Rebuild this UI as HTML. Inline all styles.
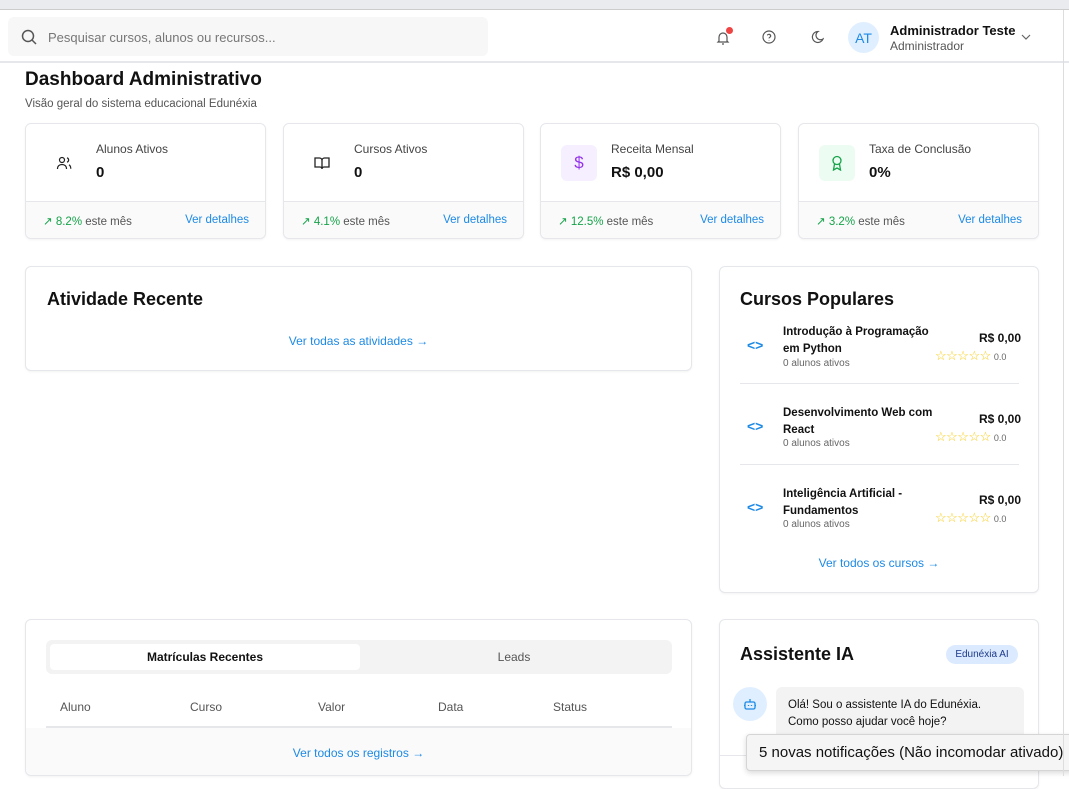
<!DOCTYPE html><html><head><meta charset="utf-8"><style>
*{box-sizing:border-box;margin:0;padding:0}
body{width:1069px;height:776px;overflow:hidden;background:#fff;font-family:"Liberation Sans",sans-serif;color:#111;position:relative}
.abs{position:absolute}
.card{position:absolute;background:#fff;border:1px solid #e5e7eb;border-radius:6px;box-shadow:0 1px 2px rgba(0,0,0,.05)}
.stat .foot{position:absolute;left:0;right:0;top:77px;bottom:0;border-top:1px solid #e5e7eb;background:#fafafa;font-size:11.5px;border-radius:0 0 6px 6px}
.g{color:#16a34a}.b{color:#1d8ae6}
.ico{position:absolute;left:20px;top:21px;width:36px;height:36px;border-radius:6px;display:flex;align-items:center;justify-content:center}
.st{font-size:13px;color:#facc15;letter-spacing:-0.5px}
</style></head><body>
<div class="abs" style="left:0;top:0;width:1069px;height:10px;background:#e9ebee;border-bottom:1px solid #ccc"></div>
<div class="abs" style="left:0;top:61px;width:1069px;height:2px;background:#e5e7eb"></div>
<div class="abs" style="left:8px;top:17px;width:480px;height:39px;background:#f7f7f7;border-radius:6px"></div>
<svg class="abs" style="left:21px;top:29px" width="16" height="16" viewBox="0 0 16 16" fill="none" stroke="#555" stroke-width="1.5"><circle cx="7" cy="7" r="5.5"/><path d="M11 11l4 4"/></svg>
<div class="abs" style="left:48px;top:30px;font-size:13px;color:#777">Pesquisar cursos, alunos ou recursos...</div>
<svg class="abs" style="left:716px;top:30px" width="14" height="16" viewBox="0 0 14 16" fill="none" stroke="#555" stroke-width="1.2"><path d="M3 11V7a4 4 0 018 0v4l1 1H2zM6 14h2"/></svg>
<div class="abs" style="left:726px;top:27px;width:7px;height:7px;border-radius:50%;background:#ef4444"></div>
<svg class="abs" style="left:762px;top:30px" width="14" height="14" viewBox="0 0 14 14" fill="none" stroke="#555" stroke-width="1.2"><circle cx="7" cy="7" r="6"/><path d="M5.3 5.3a1.8 1.8 0 013.4.7c0 1.2-1.7 1.4-1.7 2.4M7 10.3v.3"/></svg>
<svg class="abs" style="left:810px;top:30px" width="14" height="14" viewBox="0 0 14 14" fill="none" stroke="#555" stroke-width="1.2"><path d="M8 1.5a5.5 5.5 0 105 7.5A4.5 4.5 0 018 1.5z"/></svg>
<div class="abs" style="left:848px;top:22px;width:31px;height:31px;border-radius:50%;background:#e0efff;color:#1d8ae6;font-size:14px;display:flex;align-items:center;justify-content:center">AT</div>
<div class="abs" style="left:890px;top:23px;font-size:13px;font-weight:bold">Administrador Teste</div>
<div class="abs" style="left:890px;top:39px;font-size:12px;color:#555">Administrador</div>
<svg class="abs" style="left:1021px;top:34px" width="10" height="6" viewBox="0 0 10 6" fill="none" stroke="#666" stroke-width="1.2"><path d="M1 1l4 4 4-4"/></svg>
<div class="abs" style="left:25px;top:69px;font-size:19px;font-weight:bold">Dashboard Administrativo</div>
<div class="abs" style="left:25px;top:98px;font-size:11.5px;color:#555">Visão geral do sistema educacional Edunéxia</div>

<div class="card stat" style="left:25px;top:123px;width:241px;height:116px">
<div class="ico"><svg width="16" height="14" viewBox="0 0 16 14" fill="none" stroke="#222" stroke-width="1.2"><circle cx="6" cy="4" r="2.5"/><path d="M1.5 13c0-3 2-4.5 4.5-4.5s4.5 1.5 4.5 4.5M11 1.8a2.3 2.3 0 010 4.4M13 8.8c1.2.7 1.8 2 1.8 4"/></svg></div>
<div class="abs" style="left:70px;top:18px;font-size:12px;color:#444">Alunos Ativos</div>
<div class="abs" style="left:70px;top:40px;font-size:15px;font-weight:bold">0</div>
<div class="foot"><span class="abs g" style="left:17px;top:12px">↗ 8.2% <span style="color:#555">este mês</span></span><span class="abs b" style="right:16px;top:12px">Ver detalhes</span></div></div>
<div class="card stat" style="left:283px;top:123px;width:241px;height:116px">
<div class="ico"><svg width="16" height="14" viewBox="0 0 16 14" fill="none" stroke="#222" stroke-width="1.3"><path d="M1 2h4.5a2.5 2.5 0 012.5 2.5V13a2 2 0 00-2-2H1zM15 2h-4.5A2.5 2.5 0 008 4.5V13a2 2 0 012-2h5z"/></svg></div>
<div class="abs" style="left:70px;top:18px;font-size:12px;color:#444">Cursos Ativos</div>
<div class="abs" style="left:70px;top:40px;font-size:15px;font-weight:bold">0</div>
<div class="foot"><span class="abs g" style="left:17px;top:12px">↗ 4.1% <span style="color:#555">este mês</span></span><span class="abs b" style="right:16px;top:12px">Ver detalhes</span></div></div>
<div class="card stat" style="left:540px;top:123px;width:241px;height:116px">
<div class="ico" style="background:#f6efff;color:#9333ea;font-size:17px">$</div>
<div class="abs" style="left:70px;top:18px;font-size:12px;color:#444">Receita Mensal</div>
<div class="abs" style="left:70px;top:40px;font-size:15px;font-weight:bold">R$ 0,00</div>
<div class="foot"><span class="abs g" style="left:17px;top:12px">↗ 12.5% <span style="color:#555">este mês</span></span><span class="abs b" style="right:16px;top:12px">Ver detalhes</span></div></div>
<div class="card stat" style="left:798px;top:123px;width:241px;height:116px">
<div class="ico" style="background:#edfcf2"><svg width="12" height="16" viewBox="0 0 12 16" fill="none" stroke="#16a34a" stroke-width="1.3"><circle cx="6" cy="5.5" r="4"/><path d="M3.5 9l-1 6 3.5-2 3.5 2-1-6"/></svg></div>
<div class="abs" style="left:70px;top:18px;font-size:12px;color:#444">Taxa de Conclusão</div>
<div class="abs" style="left:70px;top:40px;font-size:15px;font-weight:bold">0%</div>
<div class="foot"><span class="abs g" style="left:17px;top:12px">↗ 3.2% <span style="color:#555">este mês</span></span><span class="abs b" style="right:16px;top:12px">Ver detalhes</span></div></div>

<div class="card" style="left:25px;top:266px;width:667px;height:105px">
<div class="abs" style="left:21px;top:22px;font-size:18px;font-weight:bold">Atividade Recente</div>
<div class="abs b" style="left:0;right:0;top:67px;text-align:center;font-size:12px">Ver todas as atividades →</div></div>

<div class="card" style="left:719px;top:266px;width:320px;height:327px">
<div class="abs" style="left:20px;top:22px;font-size:18px;font-weight:bold">Cursos Populares</div>
<div class="abs" style="left:20px;top:116px;width:279px;height:1px;background:#e5e7eb"></div>
<div class="abs" style="left:20px;top:197px;width:279px;height:1px;background:#e5e7eb"></div>
<div class="abs b" style="left:0;right:0;top:289px;text-align:center;font-size:12px">Ver todos os cursos →</div>
</div>

<div class="card" style="left:25px;top:619px;width:667px;height:157px">
<div class="abs" style="left:20px;top:20px;width:626px;height:34px;background:#f3f3f3;border-radius:6px"></div>
<div class="abs" style="left:24px;top:24px;width:310px;height:26px;background:#fff;border-radius:4px;font-size:12px;font-weight:bold;text-align:center;line-height:26px">Matrículas Recentes</div>
<div class="abs" style="left:334px;top:24px;width:308px;height:26px;font-size:12px;color:#555;text-align:center;line-height:26px">Leads</div>
<div class="abs" style="left:34px;top:80px;font-size:12px;color:#555">Aluno</div>
<div class="abs" style="left:164px;top:80px;font-size:12px;color:#555">Curso</div>
<div class="abs" style="left:292px;top:80px;font-size:12px;color:#555">Valor</div>
<div class="abs" style="left:412px;top:80px;font-size:12px;color:#555">Data</div>
<div class="abs" style="left:527px;top:80px;font-size:12px;color:#555">Status</div>
<div class="abs" style="left:0;right:0;top:108px;bottom:0;background:#fafafa;border-radius:0 0 6px 6px"></div>
<div class="abs" style="left:20px;top:106px;width:626px;height:2px;background:#e5e7eb"></div>
<div class="abs b" style="left:0;right:0;top:126px;text-align:center;font-size:12px">Ver todos os registros →</div>
</div>

<div class="card" style="left:719px;top:619px;width:320px;height:170px">
<div class="abs" style="left:20px;top:24px;font-size:18px;font-weight:bold">Assistente IA</div>
<div class="abs" style="left:226px;top:25px;width:72px;height:19px;border-radius:10px;background:#dbeafe;color:#1e3a8a;font-size:10px;text-align:center;line-height:19px">Edunéxia AI</div>
<div class="abs" style="left:13px;top:67px;width:34px;height:34px;border-radius:50%;background:#e0efff;display:flex;align-items:center;justify-content:center"><svg width="14" height="14" viewBox="0 0 14 14" fill="none" stroke="#1d8ae6" stroke-width="1.3"><rect x="2" y="5" width="10" height="7" rx="1.5"/><path d="M7 5V2M5.5 8v1M8.5 8v1M1 8.5h1M12 8.5h1"/></svg></div>
<div class="abs" style="left:56px;top:67px;width:248px;height:60px;background:#f3f3f3;border-radius:6px;padding:10px 12px;font-size:11.5px;line-height:17px">Olá! Sou o assistente IA do Edunéxia. Como posso ajudar você hoje?</div>
<div class="abs" style="left:0;right:0;top:135px;height:1px;background:#e5e7eb"></div>
</div>
<div class="abs" style="left:746px;top:734px;width:330px;height:37px;background:#f5f5f5;border:1px solid #d5d5d5;border-radius:4px;box-shadow:0 2px 6px rgba(0,0,0,.15);font-size:15px;padding:9px 12px;white-space:nowrap">5 novas notificações (Não incomodar ativado)</div>

<div class="abs" style="left:1063px;top:10px;width:1px;height:766px;background:#ddd"></div>

<div class="abs" style="left:747px;top:337px;color:#1d8ae6;font-size:14px;font-weight:bold">&lt;&gt;</div>
<div class="abs" style="left:783px;top:324px;font-size:11.5px;font-weight:bold;line-height:17px;width:150px">Introdução à Programação em Python</div>
<div class="abs" style="left:783px;top:358px;font-size:10px;color:#666">0 alunos ativos</div>
<div class="abs" style="left:979px;top:331px;font-size:12px;font-weight:bold">R$ 0,00</div>
<div class="abs st" style="left:935px;top:348px">☆☆☆☆☆ <span style="color:#666;font-size:9px;letter-spacing:0">0.0</span></div>

<div class="abs" style="left:747px;top:418px;color:#1d8ae6;font-size:14px;font-weight:bold">&lt;&gt;</div>
<div class="abs" style="left:783px;top:405px;font-size:11.5px;font-weight:bold;line-height:17px;width:150px">Desenvolvimento Web com React</div>
<div class="abs" style="left:783px;top:438px;font-size:10px;color:#666">0 alunos ativos</div>
<div class="abs" style="left:979px;top:412px;font-size:12px;font-weight:bold">R$ 0,00</div>
<div class="abs st" style="left:935px;top:429px">☆☆☆☆☆ <span style="color:#666;font-size:9px;letter-spacing:0">0.0</span></div>

<div class="abs" style="left:747px;top:499px;color:#1d8ae6;font-size:14px;font-weight:bold">&lt;&gt;</div>
<div class="abs" style="left:783px;top:486px;font-size:11.5px;font-weight:bold;line-height:17px;width:150px">Inteligência Artificial - Fundamentos</div>
<div class="abs" style="left:783px;top:519px;font-size:10px;color:#666">0 alunos ativos</div>
<div class="abs" style="left:979px;top:493px;font-size:12px;font-weight:bold">R$ 0,00</div>
<div class="abs st" style="left:935px;top:510px">☆☆☆☆☆ <span style="color:#666;font-size:9px;letter-spacing:0">0.0</span></div>
</body></html>
